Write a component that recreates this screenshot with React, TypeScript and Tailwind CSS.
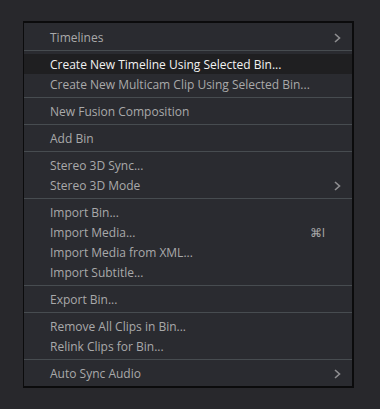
type Item = {
  label: string
  submenu?: boolean
  shortcut?: string
  active?: boolean
}

const GROUPS: Item[][] = [
  [{ label: 'Timelines', submenu: true }],
  [
    { label: 'Create New Timeline Using Selected Bin...', active: true },
    { label: 'Create New Multicam Clip Using Selected Bin...' }
  ],
  [{ label: 'New Fusion Composition' }],
  [{ label: 'Add Bin' }],
  [
    { label: 'Stereo 3D Sync...' },
    { label: 'Stereo 3D Mode', submenu: true }
  ],
  [
    { label: 'Import Bin...' },
    { label: 'Import Media...', shortcut: '⌘I' },
    { label: 'Import Media from XML...' },
    { label: 'Import Subtitle...' }
  ],
  [{ label: 'Export Bin...' }],
  [
    { label: 'Remove All Clips in Bin...' },
    { label: 'Relink Clips for Bin...' }
  ],
  [{ label: 'Auto Sync Audio', submenu: true }]
]

function Chevron() {
  return (
    <svg width="7" height="10" viewBox="0 0 7 10" className="text-[#8e8e90]">
      <polyline points="1,1 5.5,5 1,9" fill="none" stroke="currentColor" strokeWidth="1.6" />
    </svg>
  )
}

function MenuRow({ item }: { item: Item }) {
  return (
    <div
      className={`relative flex items-center h-5 pt-[2px] pl-[26px] pr-[11px] text-[12px] ${
        item.active ? 'bg-[#1f1f21] text-[#f2f2f2]' : 'text-[#a9a9aa]'
      }`}
    >
      <span className="flex-1 whitespace-nowrap">{item.label}</span>
      {item.shortcut && <span className="mr-[16px] text-[#a9a9aa]">{item.shortcut}</span>}
      {item.submenu && <Chevron />}
    </div>
  )
}

export default function App() {
  return (
    <div
      className="w-[380px] h-[409px] bg-[#28282c] pt-[21px] pl-[23px]"
      style={{ fontFamily: '"Open Sans", "Noto Sans", sans-serif' }}
    >
      <div className="w-[331px] bg-[#2a2b30] border-t-2 border-r-2 border-b-2 border-l border-[#0b0b0c] pt-px">
        {GROUPS.map((group, i) => (
          <div key={i} className={`py-[3px] ${i > 0 ? 'border-t border-[#474c50]' : ''}`}>
            {group.map((item) => (
              <MenuRow key={item.label} item={item} />
            ))}
          </div>
        ))}
      </div>
    </div>
  )
}
